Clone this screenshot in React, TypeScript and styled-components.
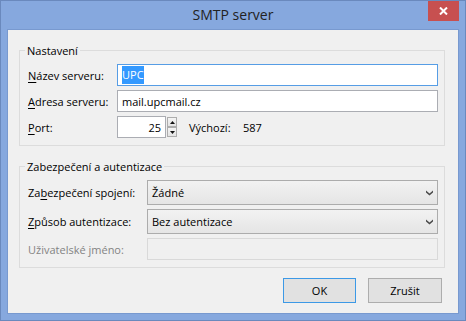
import React from "react";
import styled, { createGlobalStyle } from "styled-components";

const GlobalStyle = createGlobalStyle`
  html, body {
    margin: 0;
    padding: 0;
    background: #ffffff;
  }
  body {
    font-family: "Open Sans", "Noto Sans", sans-serif;
    font-size: 11px;
    color: #000;
  }
`;

const Window = styled.div`
  width: 466px;
  height: 321px;
  box-sizing: border-box;
  border: 1px solid #6a89bd;
  background: #86a8de;
  display: flex;
  flex-direction: column;
`;

const TitleBar = styled.div`
  height: 28px;
  display: grid;
  grid-template-columns: 1fr auto 1fr;
  align-items: start;
`;

const Title = styled.div`
  grid-column: 2;
  font-size: 14px;
  line-height: 28px;
  color: #222;
`;

const CloseButton = styled.div`
  grid-column: 3;
  justify-self: end;
  margin-right: 6px;
  width: 31px;
  height: 20px;
  background: #c75050;
  display: flex;
  align-items: center;
  justify-content: center;
`;

const Client = styled.div`
  flex: 1;
  margin: 0 6px 6px;
  border: 1px solid #7899cf;
  background: #f0f0f0;
  padding: 13px 13px 10px 11px;
  display: flex;
  flex-direction: column;
`;

const Group = styled.fieldset<{ $labelWidth: number }>`
  margin: 0;
  border: 1px solid #dcdcdc;
  padding: 6px 6px 7px 8px;
  display: grid;
  grid-template-columns: ${(p) => p.$labelWidth}px 1fr;
  align-items: center;
  row-gap: 4px;
  min-width: 0;

  & + & {
    margin-top: 13px;
  }
`;

const Legend = styled.legend`
  padding: 0 2px;
  margin-left: -3px;
  line-height: 15px;
  color: #000;
`;

const Label = styled.div<{ $disabled?: boolean }>`
  color: ${(p) => (p.$disabled ? "#838383" : "#000")};
  white-space: nowrap;

  u {
    text-decoration: underline;
    text-underline-offset: 2px;
  }
`;

const TextBox = styled.div<{ $focused?: boolean; $disabled?: boolean; $width?: number }>`
  box-sizing: border-box;
  height: 22px;
  width: ${(p) => (p.$width ? `${p.$width}px` : "auto")};
  border: 1px solid
    ${(p) => (p.$focused ? "#569de5" : p.$disabled ? "#d9d9d9" : "#abadb3")};
  background: ${(p) => (p.$disabled ? "#f0f0f0" : "#ffffff")};
  padding: 0 4px;
  display: flex;
  align-items: center;
  justify-content: ${(p) => (p.$width ? "flex-end" : "flex-start")};
  white-space: nowrap;
  overflow: hidden;
`;

const Selected = styled.span`
  display: inline-block;
  height: 18px;
  line-height: 18px;
  background: #3399ff;
  color: #ffffff;
`;

const PortRow = styled.div`
  display: flex;
  align-items: center;
`;

const Spinner = styled.div`
  margin-left: 1px;
  margin-top: 1px;
  display: flex;
  flex-direction: column;
  align-self: flex-start;
`;

const SpinButton = styled.div`
  box-sizing: border-box;
  width: 10px;
  height: 10px;
  border: 1px solid #adadad;
  background: linear-gradient(#f4f4f4, #e4e4e4);
  display: flex;
  align-items: center;
  justify-content: center;
`;

const DefaultLabel = styled.span`
  margin-left: 12px;
  width: 54px;
`;

const Select = styled.div`
  box-sizing: border-box;
  height: 25px;
  border: 1px solid #acacac;
  background: linear-gradient(#f2f2f2, #e5e5e5);
  padding: 0 4px;
  display: flex;
  align-items: center;
  justify-content: space-between;
`;

const Buttons = styled.div`
  margin-top: auto;
  display: flex;
  justify-content: flex-end;
  gap: 12px;
  padding-right: 3px;
`;

const Button = styled.div<{ $default?: boolean; $width: number }>`
  box-sizing: border-box;
  width: ${(p) => p.$width}px;
  height: 25px;
  border: 1px solid ${(p) => (p.$default ? "#3c99e6" : "#adadad")};
  background: #e1e1e1;
  display: flex;
  align-items: center;
  justify-content: center;
`;

const Chevron = () => (
  <svg width="7" height="6" viewBox="0 0 7 6">
    <path d="M0 0.5 L3.5 3.5 L7 0.5 L7 2.5 L3.5 5.5 L0 2.5 Z" fill="#4a4a4a" />
  </svg>
);

const Arrow = ({ up }: { up?: boolean }) => (
  <svg width="5" height="3" viewBox="0 0 5 3">
    <path d={up ? "M0 3 L2.5 0 L5 3 Z" : "M0 0 L2.5 3 L5 0 Z"} fill="#111" />
  </svg>
);

export default function App() {
  return (
    <>
      <GlobalStyle />
      <Window>
        <TitleBar>
          <Title>SMTP server</Title>
          <CloseButton>
            <svg width="9" height="8" viewBox="0 0 9 8">
              <path d="M1 0.5 L8 7.5 M8 0.5 L1 7.5" stroke="#fff" strokeWidth="2" />
            </svg>
          </CloseButton>
        </TitleBar>
        <Client>
          <Group $labelWidth={89}>
            <Legend>Nastavení</Legend>
            <Label>
              <u>N</u>ázev serveru:
            </Label>
            <TextBox $focused>
              <Selected>UPC</Selected>
            </TextBox>
            <Label>
              <u>A</u>dresa serveru:
            </Label>
            <TextBox>mail.upcmail.cz</TextBox>
            <Label>
              <u>P</u>ort:
            </Label>
            <PortRow>
              <TextBox $width={49}>25</TextBox>
              <Spinner>
                <SpinButton>
                  <Arrow up />
                </SpinButton>
                <SpinButton>
                  <Arrow />
                </SpinButton>
              </Spinner>
              <DefaultLabel>Výchozí:</DefaultLabel>
              <span>587</span>
            </PortRow>
          </Group>
          <Group $labelWidth={119}>
            <Legend>Zabezpečení a autentizace</Legend>
            <Label>
              Za<u>b</u>ezpečení spojení:
            </Label>
            <Select>
              <span>Žádné</span>
              <Chevron />
            </Select>
            <Label>
              <u>Z</u>působ autentizace:
            </Label>
            <Select>
              <span>Bez autentizace</span>
              <Chevron />
            </Select>
            <Label $disabled>Uživatelské jméno:</Label>
            <TextBox $disabled />
          </Group>
          <Buttons>
            <Button $default $width={73}>
              OK
            </Button>
            <Button $width={74}>Zrušit</Button>
          </Buttons>
        </Client>
      </Window>
    </>
  );
}
